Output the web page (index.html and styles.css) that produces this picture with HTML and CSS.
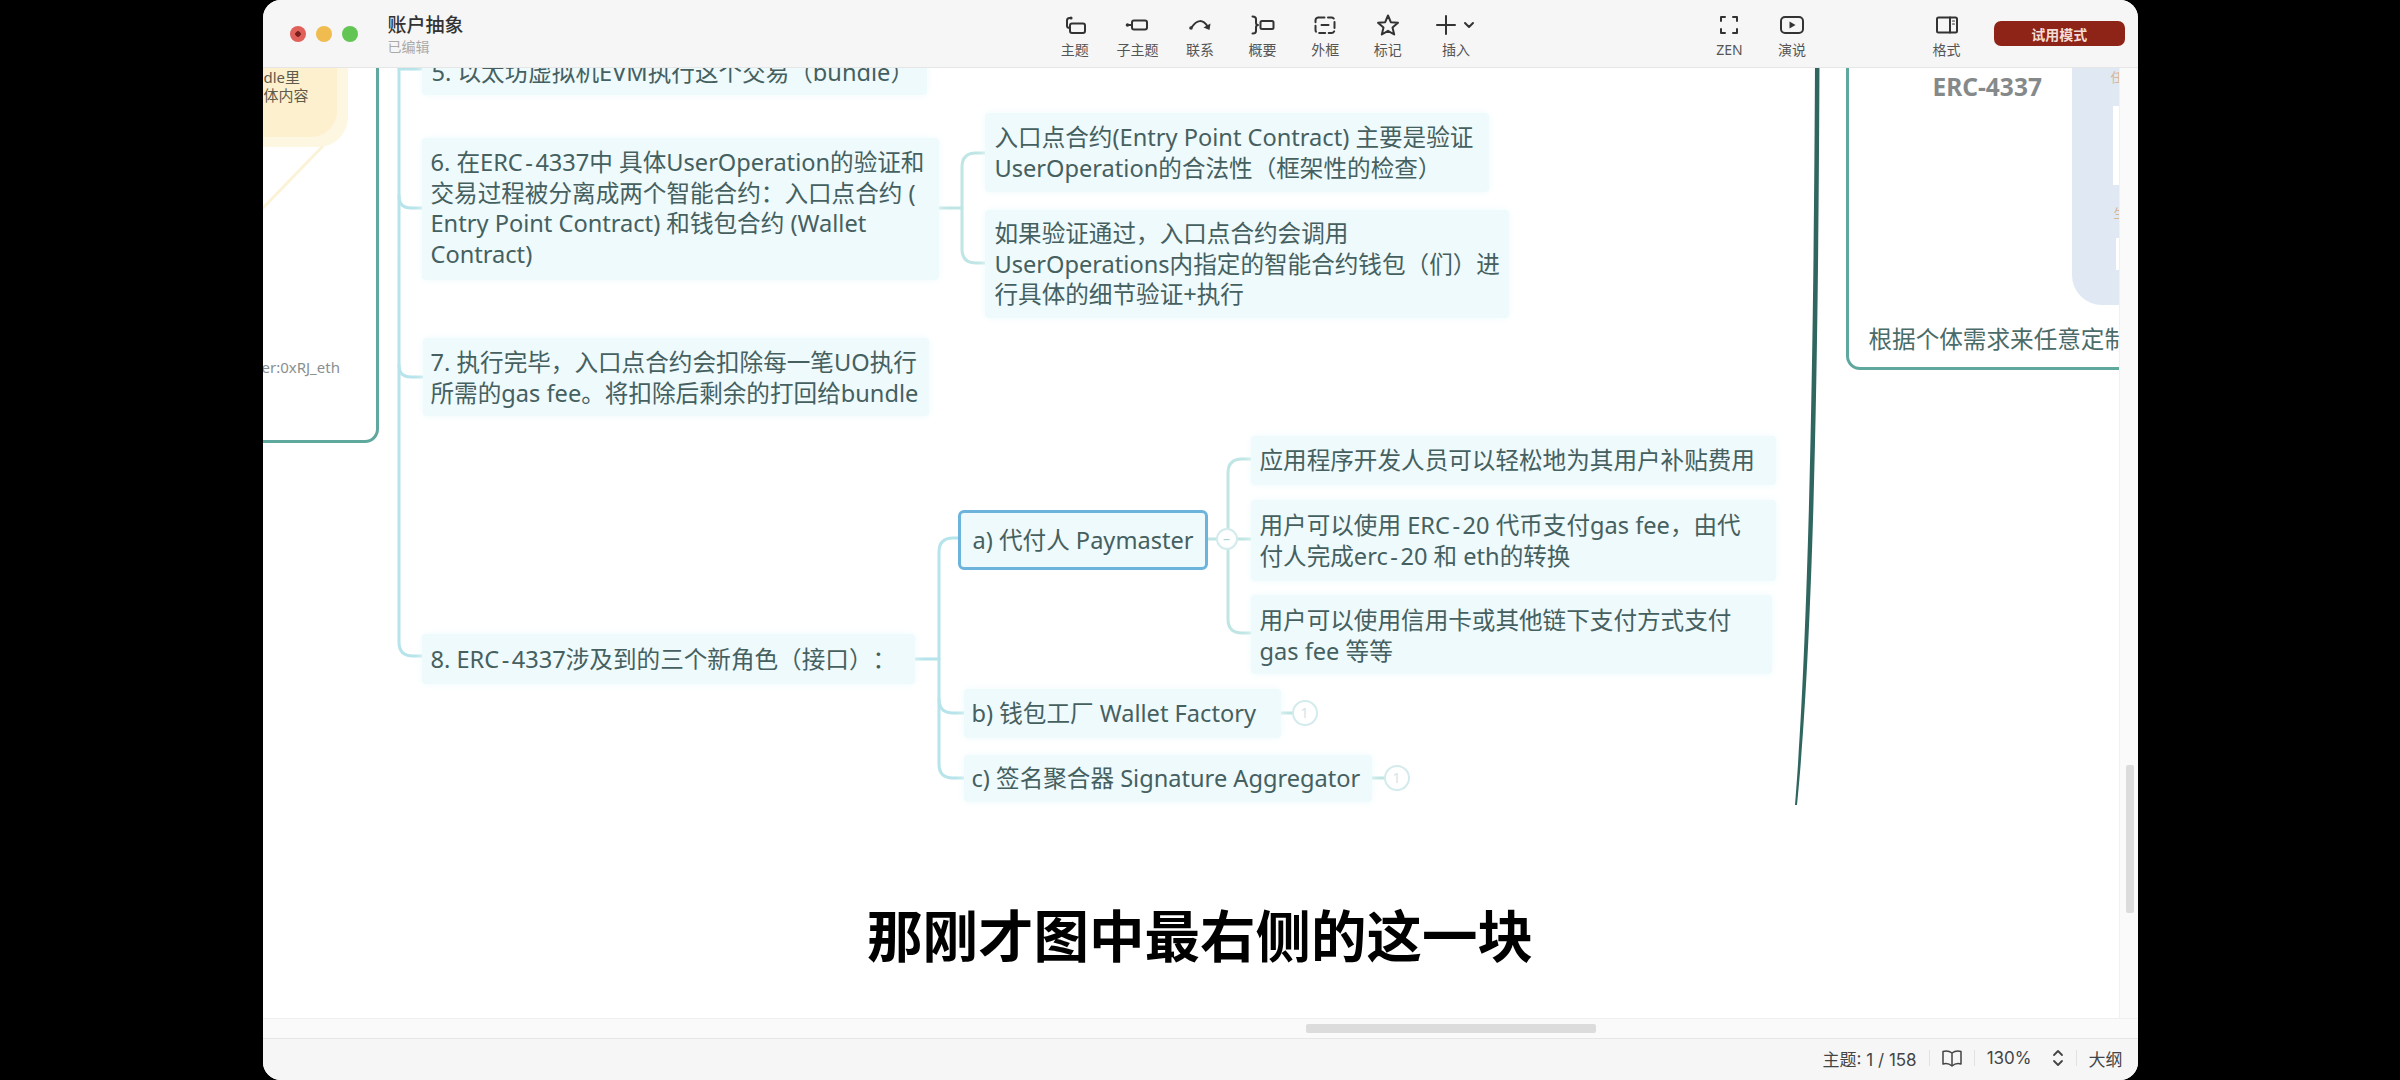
FILE: index.html
```html
<!DOCTYPE html>
<html lang="zh-CN">
  <head>
    <meta charset="UTF-8" />
    <title>账户抽象</title>
    <link rel="stylesheet" href="styles.css">
  </head>
  <body>
    <div class="window">
      <header class="topbar">
        <div class="lights">
          <span class="light red"></span>
          <span class="light yellow"></span>
          <span class="light green"></span>
        </div>
        <div class="doc">
          <div class="doc-title">账户抽象</div>
          <div class="doc-state">已编辑</div>
        </div>
        <div class="tools">
          <div class="tool">
            <svg viewBox="0 0 24 24"><circle cx="8" cy="5" r="1.6" class="solid"/><path d="M8 5H6.5Q4 5 4 7.5V13Q4 15 7 15"/><rect x="7" y="10.5" width="15" height="9.5" rx="2"/></svg>
            <span>主题</span>
          </div>
          <div class="tool">
            <svg viewBox="0 0 24 24"><circle cx="2.5" cy="12" r="1.8" class="solid"/><path d="M3 12H7"/><rect x="7" y="7.5" width="15" height="9" rx="2"/></svg>
            <span>子主题</span>
          </div>
          <div class="tool">
            <svg viewBox="0 0 24 24"><circle cx="3" cy="15" r="1.8" class="solid"/><path d="M3.5 14.5Q12 2 20 14"/><path d="M15.5 14.5L21.5 17L22.5 10.5Z" class="solid"/></svg>
            <span>联系</span>
          </div>
          <div class="tool">
            <svg viewBox="0 0 24 24"><path d="M1.500 3.500Q5 3.500 5 6V9.500Q5 12 7 12Q5 12 5 14.500V18Q5 20.500 1.500 20.500"/><rect x="9.500" y="8" width="13" height="8" rx="1.500"/></svg>
            <span>概要</span>
          </div>
          <div class="tool">
            <svg viewBox="0 0 24 24"><rect x="2.500" y="4.500" width="19" height="15.500" rx="3" stroke-dasharray="6 3.500"/><path d="M8.500 12H15.500"/></svg>
            <span>外框</span>
          </div>
          <div class="tool">
            <svg viewBox="0 0 24 24"><path d="M12 2.500L14.800 9.200L22 9.800L16.500 14.500L18.200 21.500L12 17.800L5.800 21.500L7.500 14.500L2 9.800L9.200 9.200Z"/></svg>
            <span>标记</span>
          </div>
          <div class="tool insert">
            <div class="insert-icons">
              <svg viewBox="0 0 24 24"><path d="M12 3V21M3 12H21"/></svg>
              <svg class="chevron" viewBox="0 0 12 12"><path d="M2 4L6 8L10 4"/></svg>
            </div>
            <span>插入</span>
          </div>
        </div>
        <div class="tools tools-view">
          <div class="tool">
            <svg viewBox="0 0 24 24"><path d="M8 4H4V8M16 4H20V8M4 16V20H8M20 16V20H16"/></svg>
            <span>ZEN</span>
          </div>
          <div class="tool">
            <svg viewBox="0 0 24 24"><rect x="1" y="4" width="22" height="16" rx="4"/><path d="M9.500 8.500L15.500 12L9.500 15.500Z" class="solid"/></svg>
            <span>演说</span>
          </div>
        </div>
        <div class="tools tools-format">
          <div class="tool">
            <svg viewBox="0 0 24 24"><rect x="2" y="4.500" width="20" height="15" rx="1.500"/><path d="M15 4.500V19.500"/><path d="M17.500 8H19.500M17.500 11H19.500" class="thin"/></svg>
            <span>格式</span>
          </div>
        </div>
        <button class="trial">试用模式</button>
      </header>

      <div class="middle">
        <main class="canvas">
          <div class="blob"><div class="blob-inner">dle里<br>体内容</div></div>
          <div class="frame frame-left"><span class="handle">er:0xRJ_eth</span></div>
          <div class="frame frame-right">
            <div class="frame-title">ERC-4337</div>
            <div class="frame-note">根据个体需求来任意定制</div>
          </div>
          <div class="panel">
            <span class="panel-tag tag-top">任</span>
            <span class="panel-slot slot-top"></span>
            <span class="panel-tag tag-bottom">生</span>
            <span class="panel-slot slot-bottom"></span>
          </div>

          <svg class="links" viewBox="262 68 1856 950">
            <path class="pale" d="M321 147L262 208"/>
            <path class="blue" d="M398 60V642Q398 656 412 656H421"/>
            <path class="blue" d="M398 69H421"/>
            <path class="blue" d="M398 196Q398 208 410 208H421"/>
            <path class="blue" d="M398 365Q398 377 410 377H421"/>
            <path class="mint" d="M938 208H961"/>
            <path class="mint" d="M984 153H975Q961 153 961 167V249Q961 263 975 263H984"/>
            <path class="blue" d="M914 659H938"/>
            <path class="blue" d="M957 538H952Q938 538 938 552V764Q938 778 952 778H963"/>
            <path class="blue" d="M938 699Q938 713 952 713H963"/>
            <path class="mint" d="M1207 539H1250"/>
            <path class="mint" d="M1250 459H1241Q1227 459 1227 473V619Q1227 633 1241 633H1250"/>
            <path class="mint" d="M1280 713H1292"/>
            <path class="mint" d="M1371 778H1384"/>
            <path class="trunk" d="M1814 60H1818.500C1817.500 300 1814.500 620 1796 805H1794C1809 620 1813 300 1814 60Z"/>
          </svg>

          <div class="node n5">5. 以太坊虚拟机EVM执行这个交易（bundle）</div>
          <div class="node n6">6. 在ERC<span class="dash">-</span>4337中 具体UserOperation的验证和<br>交易过程被分离成两个智能合约：入口点合约 (<br>Entry Point Contract) 和钱包合约 (Wallet<br>Contract)</div>
          <div class="node n7">7. 执行完毕，入口点合约会扣除每一笔UO执行<br>所需的gas fee。将扣除后剩余的打回给bundle</div>
          <div class="node n8">8. ERC<span class="dash">-</span>4337涉及到的三个新角色（接口）：</div>
          <div class="node e1">入口点合约(Entry Point Contract) 主要是验证<br>UserOperation的合法性（框架性的检查）</div>
          <div class="node e2">如果验证通过，入口点合约会调用<br>UserOperations内指定的智能合约钱包（们）进<br>行具体的细节验证+执行</div>
          <div class="node role-a">a) 代付人 Paymaster</div>
          <div class="node role-b">b) 钱包工厂 Wallet Factory</div>
          <div class="node role-c">c) 签名聚合器 Signature Aggregator</div>
          <div class="node c1">应用程序开发人员可以轻松地为其用户补贴费用</div>
          <div class="node c2">用户可以使用 ERC<span class="dash">-</span>20 代币支付gas fee，由代<br>付人完成erc<span class="dash">-</span>20 和 eth的转换</div>
          <div class="node c3">用户可以使用信用卡或其他链下支付方式支付<br>gas fee 等等</div>

          <span class="badge badge-a">–</span>
          <span class="badge badge-b">1</span>
          <span class="badge badge-c">1</span>
        </main>
        <div class="vbar"><span class="vthumb"></span></div>
      </div>

      <div class="hbar"><span class="hthumb"></span></div>

      <footer class="statusbar">
        <span>主题: 1 / 158</span>
        <i class="sep"></i>
        <svg class="status-icon" viewBox="0 0 20 20"><path d="M1 3.500Q6 2 10 5Q14 2 19 3.500V16Q14 14.500 10 18Q6 14.500 1 16ZM10 5V18"/></svg>
        <i class="sep"></i>
        <span class="zoom">130%</span>
        <svg class="status-arrows" viewBox="0 0 12 20"><path d="M2 7L6 3L10 7M2 13L6 17L10 13"/></svg>
        <i class="sep"></i>
        <span>大纲</span>
      </footer>

      <div class="subtitle">那刚才图中最右侧的这一块</div>
    </div>
  </body>
</html>
```

FILE: styles.css
```css
* {
  box-sizing: border-box;
}

body {
  margin: 0;
  background-color: #000;
  display: flex;
  justify-content: center;
  height: 1080px;
  overflow: hidden;
  font-family: "Noto Sans", "Noto Sans CJK SC", sans-serif;
}

.window {
  position: relative;
  width: 1875px;
  height: 1080px;
  display: flex;
  flex-direction: column;
  background-color: #fff;
  border-radius: 18px;
  overflow: hidden;
}

/* top bar */
.topbar {
  height: 68px;
  flex: none;
  display: flex;
  align-items: center;
  padding-left: 27px;
  background-color: #f6f6f6;
  border-bottom: 1px solid #e6e6e6;
  position: relative;
  z-index: 2;
}

.lights {
  display: flex;
  gap: 10px;
  width: 68px;
  flex: none;
}

.light {
  width: 16px;
  height: 16px;
  border-radius: 50%;
}

.red {
  background: radial-gradient(circle, #7a1f1c 0 2.500px, #e0605a 3px);
}

.yellow {
  background-color: #f0bc50;
}

.green {
  background-color: #62c554;
}

.doc {
  width: 100px;
  margin-left: 30px;
  flex: none;
  padding-top: 2px;
}

.doc-title {
  font-size: 19px;
  line-height: 24px;
  font-weight: 500;
  color: #333;
}

.doc-state {
  font-size: 14px;
  line-height: 20px;
  color: #aaa;
}

.tools {
  display: flex;
  flex: none;
  margin-left: 556px;
  padding-top: 5px;
}

.tools-view {
  margin-left: 205px;
}

.tools-format {
  margin-left: 92px;
}

.tool {
  width: 62.600px;
  display: flex;
  flex-direction: column;
  align-items: center;
  gap: 3px;
  font-size: 14px;
  line-height: 20px;
  color: #555;
}

.tool svg,
.status-icon,
.status-arrows {
  fill: none;
  stroke: #333;
  stroke-width: 2;
  stroke-linecap: round;
  stroke-linejoin: round;
}

.tool svg {
  width: 24px;
  height: 24px;
}

.tool svg .solid {
  fill: #333;
  stroke: none;
}

.tool svg .thin {
  stroke-width: 1.200;
}

.insert {
  width: 74px;
}

.insert-icons {
  display: flex;
  align-items: center;
  gap: 5px;
  margin-left: -4px;
}

.tool .chevron {
  width: 12px;
  height: 12px;
}

.trial {
  width: 131px;
  height: 25px;
  margin-left: 16px;
  flex: none;
  border: none;
  border-radius: 7px;
  background-color: #8e2417;
  color: #f3dcd6;
  font-family: inherit;
  font-size: 14px;
  font-weight: 700;
}

/* canvas */
.middle {
  flex: 1;
  display: flex;
  min-height: 0;
}

.canvas {
  flex: 1;
  position: relative;
  overflow: hidden;
  color: #45605f;
  font-size: 23.600px;
  line-height: 30.600px;
  text-spacing-trim: space-all;
}

.links {
  position: absolute;
  left: 0;
  top: 0;
  width: 1856px;
  height: 950px;
  fill: none;
}

.links path {
  stroke-width: 3;
  stroke-linecap: round;
}

.links .blue {
  stroke: #b6e4ea;
}

.links .mint {
  stroke: #bfe6e4;
}

.links .pale {
  stroke: #fbf3d8;
}

.links .trunk {
  fill: #2f6660;
  stroke: none;
}

.node {
  position: absolute;
  padding: 9px 10px;
  background-color: #eefafc;
  border-radius: 4px;
  box-shadow: 0 0 8px #f0fafc;
  white-space: nowrap;
}

.dash {
  padding: 0 2.500px;
}

.n5 {
  left: 159px;
  top: -21px;
  width: 505px;
  height: 48px;
  padding-top: 10px;
}

.n6 {
  left: 159px;
  top: 70px;
  width: 517px;
  height: 142px;
  padding-left: 9px;
}

.n7 {
  left: 160px;
  top: 270px;
  width: 506px;
  height: 78px;
  padding-left: 8px;
}

.n8 {
  left: 159px;
  top: 566px;
  width: 493px;
  height: 50px;
  padding-top: 10px;
  padding-left: 9px;
}

.e1 {
  left: 722px;
  top: 45px;
  width: 504px;
  height: 79px;
}

.e2 {
  left: 722px;
  top: 142px;
  width: 524px;
  height: 108px;
  padding-top: 8px;
}

.role-a {
  left: 695px;
  top: 442px;
  width: 250px;
  height: 60px;
  padding: 0 0 0 12px;
  display: flex;
  align-items: center;
  border: 3.500px solid #6db4dc;
  border-radius: 6px;
  box-shadow: none;
}

.role-b {
  left: 701px;
  top: 621px;
  width: 317px;
  height: 49px;
  padding-left: 8px;
}

.role-c {
  left: 701px;
  top: 687px;
  width: 408px;
  height: 47px;
  padding-left: 8px;
  padding-top: 8px;
}

.c1 {
  left: 988px;
  top: 368px;
  width: 525px;
  height: 49px;
  padding-left: 9px;
}

.c2 {
  left: 988px;
  top: 432px;
  width: 525px;
  height: 81px;
  padding-left: 9px;
  padding-top: 10px;
}

.c3 {
  left: 988px;
  top: 527px;
  width: 521px;
  height: 79px;
  padding-left: 9px;
  padding-top: 10px;
}

.badge {
  position: absolute;
  display: flex;
  align-items: center;
  justify-content: center;
  background-color: #fff;
  border: 2px solid #d3ebec;
  border-radius: 50%;
  color: #cfe6e8;
  font-size: 14px;
  line-height: 1;
}

.badge-a {
  left: 953px;
  top: 460px;
  width: 22px;
  height: 22px;
  color: #a9d3d4;
}

.badge-b {
  left: 1029px;
  top: 632px;
  width: 26px;
  height: 26px;
}

.badge-c {
  left: 1121px;
  top: 697px;
  width: 26px;
  height: 26px;
}

/* cut off boards around the map */
.blob {
  position: absolute;
  left: -40px;
  top: -60px;
  width: 125px;
  height: 139px;
  padding: 0 11px 10px 0;
  background-color: #fdf6e1;
  border-radius: 30px;
}

.blob-inner {
  height: 100%;
  padding: 60px 0 0 41px;
  background-color: #fdf0cf;
  border-radius: 26px;
  font-size: 15px;
  line-height: 18px;
  color: #5f5a4c;
}

.frame {
  position: absolute;
  border: 3.500px solid #5fa89e;
  border-radius: 14px;
}

.frame-left {
  left: -20px;
  top: -20px;
  width: 136px;
  height: 395px;
}

.handle {
  position: absolute;
  left: 16px;
  top: 304px;
  font-size: 15px;
  line-height: 24px;
  color: #8a8f8f;
  white-space: nowrap;
}

.frame-right {
  left: 1583px;
  top: -20px;
  width: 300px;
  height: 322px;
}

.frame-title {
  position: absolute;
  left: 84px;
  top: 18px;
  font-size: 24.500px;
  line-height: 36px;
  font-weight: 700;
  color: #85898a;
  white-space: nowrap;
}

.frame-note {
  position: absolute;
  left: 20px;
  top: 270px;
  font-size: 23.600px;
  line-height: 36px;
  color: #4a6b68;
  white-space: nowrap;
}

.panel {
  position: absolute;
  left: 1809px;
  top: -30px;
  width: 90px;
  height: 267px;
  background-color: #dfe8f3;
  border-radius: 30px;
}

.panel-tag {
  position: absolute;
  left: 39px;
  font-size: 13px;
  line-height: 16px;
  color: #d8b49a;
}

.tag-top {
  top: 31px;
}

.tag-bottom {
  top: 167px;
  left: 42px;
}

.panel-slot {
  position: absolute;
  background-color: #fff;
}

.slot-top {
  left: 41px;
  top: 68px;
  width: 40px;
  height: 79px;
}

.slot-bottom {
  left: 44px;
  top: 200px;
  width: 40px;
  height: 32px;
}

/* scrollbars */
.vbar {
  width: 19px;
  flex: none;
  padding-left: 6px;
  background-color: #fafafa;
  border-left: 1px solid #f0f0f0;
}

.vthumb {
  display: block;
  width: 8px;
  height: 148px;
  margin-top: 697px;
  background-color: #dcdcdc;
  border-radius: 2px;
}

.hbar {
  height: 20px;
  flex: none;
  padding: 5px 0 0 1043px;
  background-color: #fafafa;
  border-top: 1px solid #f0f0f0;
}

.hthumb {
  display: block;
  width: 290px;
  height: 9px;
  background-color: #dcdcdc;
  border-radius: 2px;
}

/* status bar */
.statusbar {
  height: 42px;
  flex: none;
  display: flex;
  align-items: center;
  justify-content: flex-end;
  gap: 12px;
  padding: 0 15px 3px 0;
  background-color: #f6f6f6;
  border-top: 1px solid #e6e6e6;
  font-family: Inter, "Noto Sans CJK SC", sans-serif;
  font-size: 17px;
  color: #444;
}

.sep {
  width: 1px;
  height: 16px;
  background-color: #e2e2e2;
}

.status-icon {
  width: 20px;
  height: 20px;
  stroke: #444;
  stroke-width: 1.500;
}

.zoom {
  margin-right: 8px;
}

.status-arrows {
  width: 12px;
  height: 20px;
  stroke: #444;
  stroke-width: 1.800;
}

/* burned in caption */
.subtitle {
  position: absolute;
  left: 0;
  right: 0;
  top: 893px;
  text-align: center;
  font-family: "Noto Sans CJK SC", sans-serif;
  font-size: 55.500px;
  line-height: 80px;
  font-weight: 700;
  color: #000;
}
```
